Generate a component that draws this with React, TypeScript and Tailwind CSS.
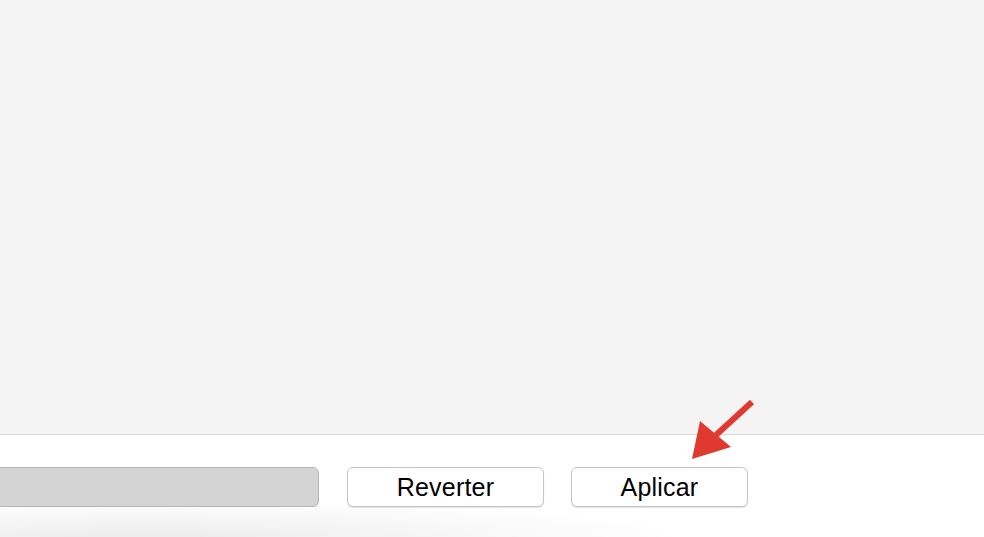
import React from 'react';

export default function App() {
  return (
    <div className="relative w-[984px] h-[537px] overflow-hidden flex flex-col font-['Liberation_Sans',Arial,sans-serif] text-black">
      {/* Top pane */}
      <div className="h-[435px] bg-[#f4f4f4] border-b border-[#dadada]" />

      {/* Bottom toolbar */}
      <div className="flex-1 bg-[radial-gradient(ellipse_55%_35%_at_15%_100%,#ececec_0%,#ffffff_100%)]">
        <div className="flex items-center pt-[32px]">
          <div className="-ml-3 w-[331px] h-[40px] rounded-[6px] bg-[#d4d4d4] border border-[#b5b5b5]" />
          <button className="ml-[28px] w-[197px] h-[40px] rounded-[6px] bg-white border border-[#c6c6c6] shadow-[0_1px_1px_rgba(0,0,0,0.12)] text-[25px] leading-none tracking-[0.2px]">
            Reverter
          </button>
          <button className="ml-[27px] w-[177px] h-[40px] rounded-[6px] bg-white border border-[#c6c6c6] shadow-[0_1px_1px_rgba(0,0,0,0.12)] text-[25px] leading-none tracking-[0.2px]">
            Aplicar
          </button>
        </div>
      </div>

      {/* Red annotation arrow */}
      <svg className="absolute left-0 top-0" width="984" height="537" viewBox="0 0 984 537">
        <line x1="752" y1="402" x2="716" y2="435" stroke="#e0392f" strokeWidth="6" strokeLinecap="butt" />
        <polygon points="692,459 700,421 731,447" fill="#e0392f" />
      </svg>
    </div>
  );
}
